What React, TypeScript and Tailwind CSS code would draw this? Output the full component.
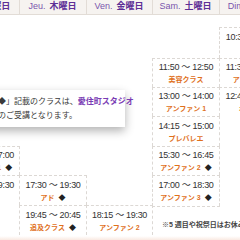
type Slot = { time: string; name: string; mark?: boolean; h: number }
type Col = { en: string; jp: string; w: string; top: string; slots: Slot[] }

const cols: Col[] = [
  {
    en: 'Mer.', jp: '水曜日', w: 'w-[67px]', top: 'h-[131px]',
    slots: [
      { time: '16:00 〜 17:00', name: 'アンファン 1', mark: true, h: 29 },
      { time: '18:00 〜 19:30', name: 'ジャズ', h: 30 },
    ],
  },
  {
    en: 'Jeu.', jp: '木曜日', w: 'w-[68px]', top: 'h-[160px]',
    slots: [
      { time: '17:30 〜 19:30', name: 'アド', mark: true, h: 30 },
      { time: '19:45 〜 20:45', name: '追及クラス', mark: true, h: 30 },
    ],
  },
  {
    en: 'Ven.', jp: '金曜日', w: 'w-[67px]', top: 'h-[190px]',
    slots: [{ time: '18:15 〜 19:30', name: 'アンファン 2', h: 30 }],
  },
  {
    en: 'Sam.', jp: '土曜日', w: 'w-[68px]', top: 'h-[43px]',
    slots: [
      { time: '11:50 〜 12:50', name: '美容クラス', h: 29 },
      { time: '13:00 〜 14:00', name: 'アンファン 1', h: 29 },
      { time: '14:15 〜 15:00', name: 'プレバレエ', h: 30 },
      { time: '15:30 〜 16:45', name: 'アンファン 2', mark: true, h: 29 },
      { time: '17:00 〜 18:30', name: 'アンファン 3', mark: true, h: 31 },
    ],
  },
  {
    en: 'Dim.', jp: '日曜日', w: 'w-[68px]', top: 'h-[12px]',
    slots: [
      { time: '10:30 〜 11:30', name: 'バレエ', h: 31 },
      { time: '11:30 〜 12:30', name: 'アンファン 1', h: 29 },
      { time: '12:45 〜 13:45', name: 'ポワント', h: 29 },
    ],
  },
]

const sans = 'font-["Liberation_Sans","Noto_Sans_CJK_JP",sans-serif]'

export default function App() {
  return (
    <div className={`relative w-[240px] h-[240px] overflow-hidden bg-white ${sans}`}>
      <div className="ml-[-47px] w-[340px]">
        <div className="flex h-[15px] bg-[#f6f3f0] border-b border-[#e2dcd6]">
          {cols.map((c, i) => (
            <div
              key={c.en}
              className={`${c.w} shrink-0 flex items-center justify-center gap-[4px] border-r border-[#e2dcd6] ${i > 0 ? '-ml-px' : ''}`}
            >
              <span className="text-[9px] text-[#7a55ad]">{c.en}</span>
              <span className="text-[9px] font-bold text-[#5e2f96]">{c.jp}</span>
            </div>
          ))}
        </div>

        <div className="flex">
          {cols.map((c, ci) => (
            <div key={c.en} className={`${c.w} shrink-0 flex flex-col ${ci > 0 ? '-ml-px' : ''}`}>
              <div className={c.top} />
              {c.slots.map((s, i) => (
                <div
                  key={i}
                  style={{ height: s.h }}
                  className="flex flex-col items-center justify-center gap-[3px] border-x border-t border-dashed border-[#dcd8d4] bg-white"
                >
                  <span className="text-[9px] leading-[10px] tracking-[-0.3px] text-[#333]">{s.time}</span>
                  <span className="flex items-center gap-[4px] text-[7px] leading-[9px] font-bold text-[#e0701c]">
                    {s.name}
                    {s.mark && <span className="text-[7px] text-[#222]">◆</span>}
                  </span>
                </div>
              ))}
              {c.en === 'Sam.' && (
                <div className="h-[31px] pt-[13px] pl-[10px] whitespace-nowrap text-[7px] font-bold text-[#444] border-t border-dashed border-[#dcd8d4]">
                  ※5 週目や祝祭日はお休みです
                </div>
              )}
            </div>
          ))}
        </div>
      </div>

      {/* note popup */}
      <div className="absolute left-[-12px] top-[90px] w-[137px] h-[37px] bg-white shadow-[0_4px_9px_rgba(0,0,0,0.3)] flex flex-col justify-center gap-[4px] pl-[2px]">
        <p className="whitespace-nowrap text-[8px] leading-[10px] text-[#3a3a3a]">
          「◆」記載のクラスは、<span className="font-bold text-[#7a3cb4]">愛住町スタジオ</span>
        </p>
        <p className="whitespace-nowrap text-[8px] leading-[10px] text-[#3a3a3a]">でのご受講となります。</p>
      </div>

      <div className="absolute left-0 bottom-0 w-[240px] h-[4px] bg-gradient-to-b from-white to-[#f9e9e2]" />
    </div>
  )
}
